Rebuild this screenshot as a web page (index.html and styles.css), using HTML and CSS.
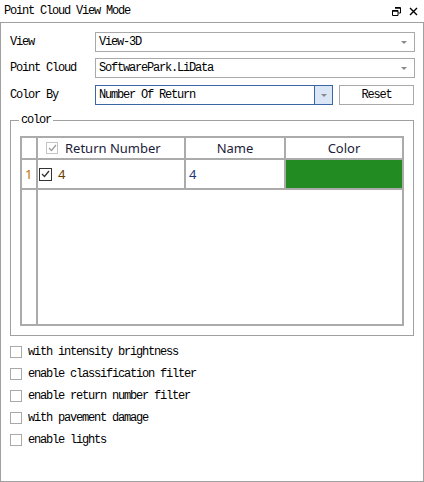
FILE: index.html
```html
<!DOCTYPE html>
<html>
<head>
<meta charset="utf-8">
<link rel="stylesheet" href="styles.css">
</head>
<body>
<div class="window">
  <div class="titlebar">
    <span class="title">Point Cloud View Mode</span>
    <span class="tools">
      <svg class="ico" width="9" height="9" viewBox="0 0 9 9"><path d="M3 0.5H8.5V6H6.5M0.5 3.5H6V8.5H0.5Z" fill="none" stroke="#000" stroke-width="1"/><path d="M3 1H8" stroke="#000" stroke-width="1.5"/><path d="M0.5 4H6" stroke="#000" stroke-width="1.5"/></svg>
      <svg class="ico" width="9" height="9" viewBox="0 0 9 9"><path d="M1 1L8 8M8 1L1 8" stroke="#000" stroke-width="1.4"/></svg>
    </span>
  </div>
  <div class="panel">
    <div class="row">
      <span class="lbl">View</span>
      <div class="combo"><span class="val">View-3D</span><span class="arrow"></span></div>
    </div>
    <div class="row">
      <span class="lbl">Point Cloud</span>
      <div class="combo"><span class="val">SoftwarePark.LiData</span><span class="arrow"></span></div>
    </div>
    <div class="row row3">
      <span class="lbl">Color By</span>
      <div class="combo active"><span class="val">Number Of Return</span><span class="btn"><span class="arrow"></span></span></div>
      <div class="reset">Reset</div>
    </div>
    <fieldset class="group">
      <legend>color</legend>
      <div class="grid">
        <div class="c corner"></div>
        <div class="c hdr hdr-first"><span class="cb cb-light"><svg width="9" height="8" viewBox="0 0 9 8"><path d="M1 4L3.5 6.5L8 1" fill="none" stroke="#9a9a9a" stroke-width="1.2"/></svg></span><span>Return Number</span></div>
        <div class="c hdr center">Name</div>
        <div class="c hdr center">Color</div>
        <div class="c rowhdr">1</div>
        <div class="c cell first"><span class="cb cb-dark"><svg width="9" height="8" viewBox="0 0 9 8"><path d="M1 4L3.5 6.5L8 1" fill="none" stroke="#333" stroke-width="1.3"/></svg></span><span class="num">4</span></div>
        <div class="c cell name">4</div>
        <div class="c swatch" style="background:#228b22"></div>
        <div class="c empty-hdr"></div>
        <div class="c empty"></div>
      </div>
    </fieldset>
    <div class="checks">
      <label class="chk"><span class="box"></span>with intensity brightness</label>
      <label class="chk"><span class="box"></span>enable classification filter</label>
      <label class="chk"><span class="box"></span>enable return number filter</label>
      <label class="chk"><span class="box"></span>with pavement damage</label>
      <label class="chk"><span class="box"></span>enable lights</label>
    </div>
  </div>
</div>
</body>
</html>
```

FILE: styles.css
```css
* { box-sizing: border-box; }
html, body { margin: 0; padding: 0; background: #fff; }
body {
  width: 424px;
  height: 482px;
  font-family: "Liberation Mono", "DejaVu Sans Mono", monospace;
  font-size: 12px;
  letter-spacing: -1.2px;
  color: #000;
}
.window { width: 424px; height: 482px; display: flex; flex-direction: column; }
.titlebar {
  height: 22px;
  display: flex;
  align-items: center;
  justify-content: space-between;
  padding: 0 6px 0 4px;
}
.title { line-height: 22px; }
.tools { display: flex; gap: 8px; align-items: center; }
.ico { display: block; }
.panel {
  flex: 1;
  border: 1px solid #a0a0a0;
  padding: 9px 8px 0 9px;
  display: flex;
  flex-direction: column;
}
.row { display: flex; align-items: center; height: 20px; margin-bottom: 6px; }
.row3 { margin-top: 1px; margin-bottom: 0; }
.lbl { width: 85px; flex: none; }
.combo {
  flex: 1;
  height: 20px;
  border: 1px solid #a9a9a9;
  display: flex;
  align-items: center;
  padding-left: 3px;
}
.combo .val { flex: 1; }
.arrow {
  width: 0; height: 0;
  border-left: 3px solid transparent;
  border-right: 3px solid transparent;
  border-top: 3px solid #8a8a8a;
  margin-right: 7px;
}
.combo.active { border-color: #3a66a4; flex: none; width: 238px; padding-right: 0; }
.btn {
  width: 18px;
  height: 18px;
  background: #dae6f5;
  border-left: 1px solid #3a66a4;
  display: flex;
  align-items: center;
  justify-content: center;
}
.btn .arrow { margin: 0; }
.reset {
  width: 75px;
  height: 20px;
  margin-left: 6px;
  border: 1px solid #a9a9a9;
  display: flex;
  align-items: center;
  justify-content: center;
}
.group {
  margin: 8px 0 0 0;
  padding: 9px 8px 8px 9px;
  width: 404px;
  height: 223px;
  border: 1px solid #a0a0a0;
  min-width: 0;
}
.group legend { padding: 0 2px; margin-left: -1px; line-height: 14px; }
.grid {
  width: 384px;
  height: 190px;
  border: 2px solid #ababab;
  background: #ababab;
  display: grid;
  grid-template-columns: 14px 146px 98px 116px;
  grid-template-rows: 20px 28px 1fr;
  gap: 2px;
  font-family: "Noto Sans", "Open Sans", sans-serif;
  font-size: 13px;
  letter-spacing: 0;
}
.c { background: #fff; display: flex; align-items: center; }
.hdr { color: #1c1c3a; }
.hdr-first { padding-left: 8px; gap: 7px; }
.center { justify-content: center; }
.cb {
  width: 13px; height: 13px;
  display: flex; align-items: center; justify-content: center;
  flex: none;
}
.cb-light { width: 12px; height: 12px; border: 1px solid #c4c4c4; }
.cb-dark { border: 1px solid #333; }
.rowhdr { color: #c07000; padding-left: 3px; }
.first { padding-left: 1px; gap: 6px; }
.num { color: #6a4000; }
.name { color: #1c3a7a; padding-left: 3px; }
.empty { grid-column: 2 / 5; }
.checks { display: flex; flex-direction: column; margin-top: 5px; }
.chk { display: flex; align-items: center; height: 22px; }
.box {
  width: 12px; height: 12px;
  border: 1px solid #a9a9a9;
  margin-right: 6px;
  flex: none;
}
```
